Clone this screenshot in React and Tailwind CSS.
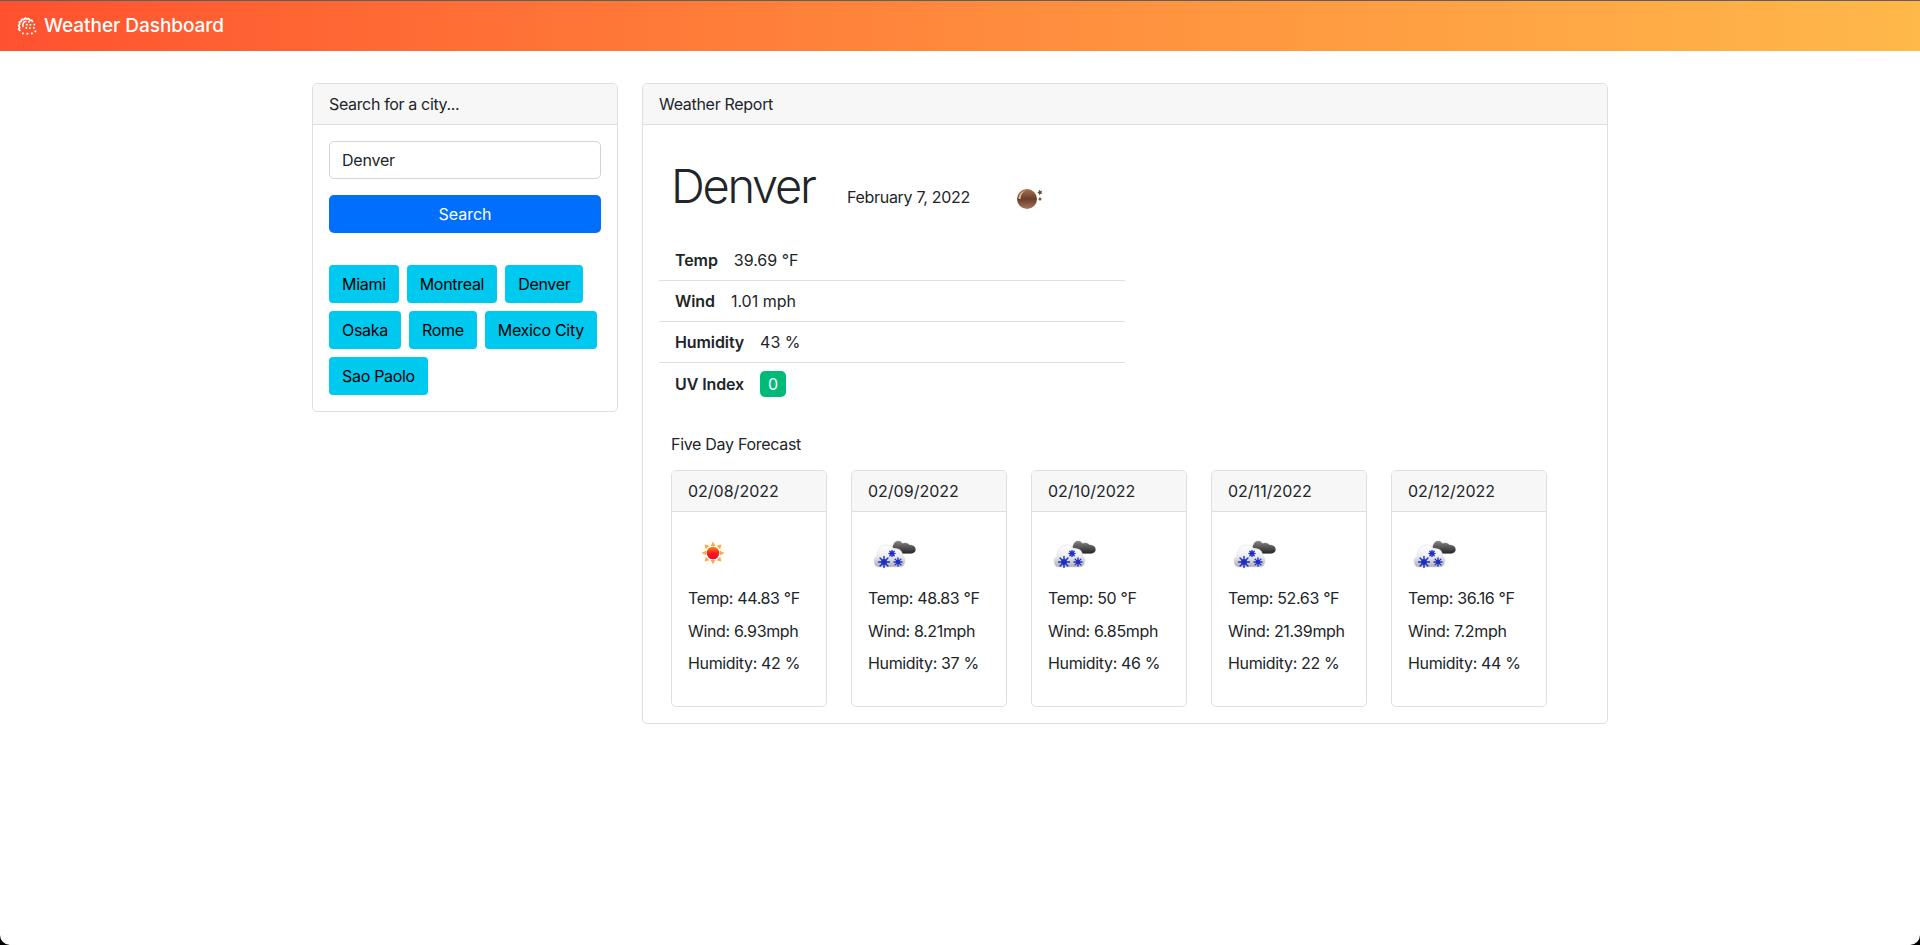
const sans = "font-['Inter','Liberation_Sans',sans-serif]";

function Logo() {
  return (
    <svg width="20" height="20" viewBox="0 0 20 20" className="-mt-[2px] shrink-0" fill="none">
      <path d="M3 15.500l-1.300-1.300 1-1.700-1.200-1.800 1.200-1.500-.4-2 1.800-.8.600-2 2 .2 1.500-1.500 1.700 1 1.900-.5 1 1.500 1.900.3" stroke="#fff" strokeWidth="1.700" strokeLinejoin="round" strokeLinecap="round" />
      <path d="M6 11.500c-.5-2.500.5-4.500 3-5.200" stroke="#fff" strokeWidth="1.500" strokeLinecap="round" />
      <g fill="#fff">
        <rect x="11" y="6" width="1.700" height="1.700" /><rect x="14.500" y="5.500" width="1.700" height="1.700" />
        <rect x="9" y="8.800" width="1.700" height="1.700" /><rect x="12.500" y="9" width="1.700" height="1.700" /><rect x="16.500" y="8.800" width="1.700" height="1.700" />
        <rect x="8.500" y="12" width="1.700" height="1.700" /><rect x="12" y="12.200" width="1.700" height="1.700" /><rect x="16" y="12" width="1.700" height="1.700" />
        <rect x="5" y="17.500" width="1.800" height="1.800" /><rect x="9.500" y="17.800" width="1.800" height="1.800" /><rect x="14" y="17.500" width="1.800" height="1.800" /><rect x="17.500" y="15.500" width="1.700" height="1.700" />
      </g>
    </svg>
  );
}

function Moon() {
  return (
    <svg width="50" height="50" viewBox="0 0 50 50" className="shrink-0">
      <defs>
        <linearGradient id="moon" x1="0" y1="0" x2="0" y2="1">
          <stop offset="0" stopColor="#a87050" />
          <stop offset="0.5" stopColor="#6a3d28" />
          <stop offset="1" stopColor="#a8745a" />
        </linearGradient>
      </defs>
      <circle cx="22" cy="27" r="10" fill="url(#moon)" />
      <path d="M13.500 27c0-4.500 3-7.700 7.500-8.800-3.500 1.800-5.300 4.800-5.500 8.800z" fill="#d8b8a0" />
      <path d="M34 17.500l1.200 1.500 1.800-.5-.6 1.800 1 1.500-1.800 0-1.200 1.400-.5-1.800-1.700-.7 1.500-1z" fill="#6e4a38" />
      <circle cx="35" cy="27" r="1.500" fill="#7a5240" />
    </svg>
  );
}

function Sun() {
  return (
    <svg width="50" height="50" viewBox="0 0 50 50" className="shrink-0">
      <defs>
        <linearGradient id="sun" x1="0" y1="0" x2="0" y2="1">
          <stop offset="0" stopColor="#ff8a10" />
          <stop offset="0.5" stopColor="#ff1c1c" />
          <stop offset="1" stopColor="#f80030" />
        </linearGradient>
      </defs>
      <g fill="#ffa83c">
        <path d="M25 13.500l2.300 4.500h-4.600z" />
        <path d="M25 36.500l2.300-4.500h-4.600z" />
        <path d="M13.500 25l4.500-2.300v4.600z" />
        <path d="M36.500 25l-4.500-2.300v4.600z" />
        <path d="M16.500 16.500l4.800 1.300-3.500 3.500z" />
        <path d="M33.500 16.500l-4.800 1.300 3.500 3.500z" />
        <path d="M16.500 33.500l4.800-1.300-3.500-3.500z" />
        <path d="M33.500 33.500l-4.800-1.300 3.500-3.500z" />
      </g>
      <circle cx="25" cy="25" r="6.300" fill="url(#sun)" />
    </svg>
  );
}

function Flake({ x, y, r }) {
  return (
    <g stroke="#2030c0" strokeWidth="1.400" strokeLinecap="round">
      <circle cx={x} cy={y} r={r * 0.55} fill="#3048d8" stroke="none" />
      <path d={`M${x - r} ${y}h${2 * r}M${x} ${y - r}v${2 * r}M${x - r * 0.72} ${y - r * 0.72}l${r * 1.44} ${r * 1.44}M${x + r * 0.72} ${y - r * 0.72}l${-r * 1.44} ${r * 1.44}`} />
    </g>
  );
}

function Snow({ id }) {
  return (
    <svg width="50" height="50" viewBox="0 0 50 50" className="shrink-0">
      <defs>
        <linearGradient id={`dark${id}`} x1="0" y1="0" x2="0" y2="1">
          <stop offset="0" stopColor="#888" />
          <stop offset="1" stopColor="#222" />
        </linearGradient>
        <linearGradient id={`white${id}`} x1="0" y1="0" x2="0" y2="1">
          <stop offset="0" stopColor="#fff" />
          <stop offset="0.5" stopColor="#eeeef2" />
          <stop offset="1" stopColor="#aeaeb8" />
        </linearGradient>
      </defs>
      <path d="M24 20c.5-4 3-7.500 6-7.500 2.500 0 3.500 1 4.500 2.500 2.500-1 5.500-.5 7 1.500 3.500-.2 6.500 2 6.500 5 0 2.500-2.500 4.500-6 4.500H34c-1.500-3-4.500-5-10-6z" fill={`url(#dark${id})`} stroke="#fff" strokeWidth="0.800" />
      <path d="M11 39c-3.500 0-5-2.500-5-5.500 0-2.500 1-4.500 3-5 0-6 3.500-11.500 9.500-11.500 3.500 0 5.500 1.500 7 4 1-.2 3-.4 4.500 0 3.500 1 4.500 4 4.500 7 1.800.8 2.500 2.700 2.500 5 0 3.500-2 6-5 6z" fill={`url(#white${id})`} stroke="#dcdce2" strokeWidth="0.600" />
      <Flake x={16} y={34} r={5.500} />
      <Flake x={24} y={25.500} r={3} />
      <Flake x={30} y={34} r={4} />
    </svg>
  );
}

const forecast = [
  { date: "02/08/2022", temp: "44.83", wind: "6.93", hum: "42", icon: "sun" },
  { date: "02/09/2022", temp: "48.83", wind: "8.21", hum: "37", icon: "snow" },
  { date: "02/10/2022", temp: "50", wind: "6.85", hum: "46", icon: "snow" },
  { date: "02/11/2022", temp: "52.63", wind: "21.39", hum: "22", icon: "snow" },
  { date: "02/12/2022", temp: "36.16", wind: "7.2", hum: "44", icon: "snow" },
];

const cities = ["Miami", "Montreal", "Denver", "Osaka", "Rome", "Mexico City", "Sao Paolo"];

const stats = [
  { label: "Temp", value: <span>39.69 °F</span> },
  { label: "Wind", value: <span>1.01 mph</span> },
  { label: "Humidity", value: <span>43 %</span> },
  { label: "UV Index", value: <span className="inline-flex h-[26px] w-[26px] items-center justify-center rounded-[5px] bg-[#00ba78] text-white">0</span> },
];

function CardHeader({ children }) {
  return <div className="h-[41px] border-b border-[#dfdfdf] bg-[#f7f7f7] px-4 py-2 leading-6">{children}</div>;
}

export default function App() {
  return (
    <div className={`relative h-[945px] overflow-hidden bg-white text-[16px] leading-6 text-[#212529] ${sans}`}>
      <header className="flex h-[51px] items-center gap-[7px] border-t border-[#5f5f5f] bg-gradient-to-r from-[#ff512f] to-[#ffb84a] pl-[17px] text-[19px] font-medium tracking-[-0.05px] text-white">
        <Logo />
        <span>Weather Dashboard</span>
      </header>

      <main className="mx-auto flex w-[1296px] items-start gap-6 pt-[32px]">
        <section className="w-[306px] shrink-0 overflow-hidden rounded-[5px] border border-[#dfdfdf]">
          <CardHeader><span className="tracking-[-0.35px]">Search for a city...</span></CardHeader>
          <div className="flex flex-col p-4">
            <div className="flex h-[38px] items-center rounded-[5px] border border-[#ced4da] px-3 tracking-[-0.2px]">Denver</div>
            <button className="mt-4 h-[38px] rounded-[5px] bg-[#006ffd] text-white">Search</button>
            <div className="mt-8 flex flex-wrap gap-2 tracking-[-0.3px]">
              {cities.map((c) => (
                <span key={c} className="flex h-[38px] items-center rounded-[4px] bg-[#00c9f0] px-[13px] text-black">{c}</span>
              ))}
            </div>
          </div>
        </section>

        <section className="h-[641px] w-[966px] shrink-0 overflow-hidden rounded-[5px] border border-[#dfdfdf]">
          <CardHeader><span className="tracking-[-0.3px]">Weather Report</span></CardHeader>
          <div className="px-4 pt-4">
            <div className="flex h-[99px] items-center pl-[12px]">
              <h1 className="mb-[10px] w-[176px] shrink-0 text-[47px] leading-[58px] font-light tracking-[-2.300px]">Denver</h1>
              <span className="mt-[13px] w-[170px] shrink-0 tracking-[-0.3px]">February 7, 2022</span>
              <div className="-ml-[12px] mt-[13px]"><Moon /></div>
            </div>
            <ul className="w-[466px]">
              {stats.map((s, i) => (
                <li key={s.label} className={`flex h-[41px] items-center gap-4 px-4 ${i < 3 ? "border-b border-[#dfdfdf]" : ""}`}>
                  <span className="font-semibold tracking-[-0.1px]">{s.label}</span>
                  {s.value}
                </li>
              ))}
            </ul>
            <h2 className="mt-[28px] ml-3 text-[16px] leading-6 font-normal tracking-[-0.3px]">Five Day Forecast</h2>
            <div className="mt-[14px] ml-3 flex gap-6">
              {forecast.map((f, i) => (
                <article key={f.date} className="h-[237px] w-[156px] shrink-0 overflow-hidden rounded-[5px] border border-[#dfdfdf]">
                  <CardHeader>{f.date}</CardHeader>
                  <div className="px-4 pt-[16px] tracking-[-0.35px]">
                    <div className="h-[50px]">{f.icon === "sun" ? <Sun /> : <Snow id={i} />}</div>
                    <p className="mt-[8px] h-[32.500px]">Temp: {f.temp} °F</p>
                    <p className="h-[32.500px]">Wind: {f.wind}mph</p>
                    <p className="h-[32.500px]">Humidity: {f.hum} %</p>
                  </div>
                </article>
              ))}
            </div>
          </div>
        </section>
      </main>

      <svg width="10" height="10" viewBox="0 0 10 10" className="absolute bottom-0 left-0">
        <path d="M0 0A10 10 0 0 0 10 10H0z" fill="#000" />
      </svg>
      <svg width="10" height="10" viewBox="0 0 10 10" className="absolute right-0 bottom-0">
        <path d="M10 0A10 10 0 0 1 0 10H10z" fill="#000" />
      </svg>
    </div>
  );
}
